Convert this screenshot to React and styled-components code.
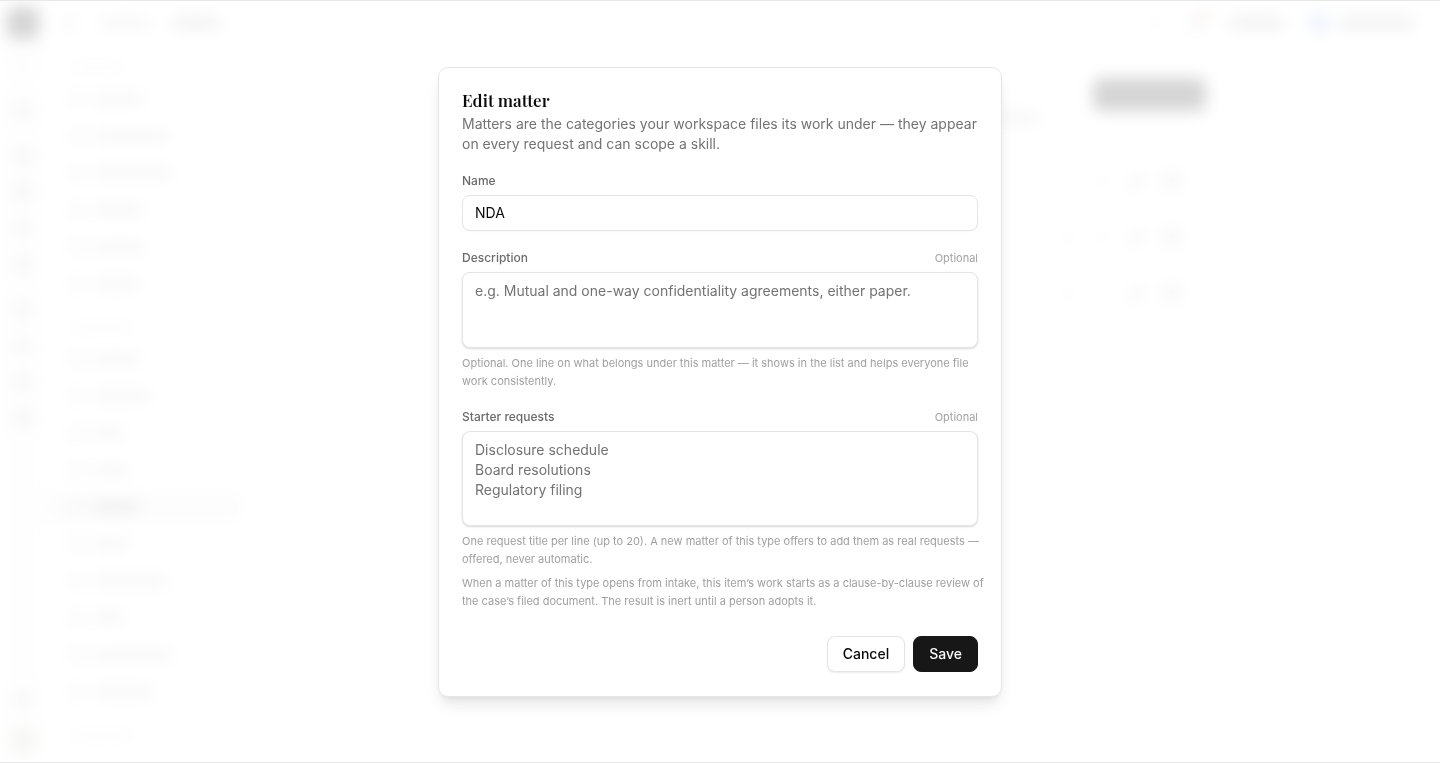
import React, { useState } from 'react'
import styled, { createGlobalStyle } from 'styled-components'
import { Bell, Box, ChevronDown, ChevronUp, Circle, FileText, Folder, Inbox, Layers, Pencil, Search, Settings, Trash2, Users } from 'lucide-react'

const railGroups = [
    [Search],
    [Inbox],
    [FileText, Layers, Users, Box],
    [Users, Folder, Box, Layers]
]

// widths of the label placeholders in the side menu
const menuTop = [50, 76, 80, 50, 52, 48]
const menuBottom = [46, 58, 32, 36, 46, 36, 74, 32, 80, 60]

const App = () => {
    const [matter, setMatter] = useState({
        name: "NDA",
        description: "",
        starters: ""
    })

    function handleChange(e) {
        setMatter({
            ...matter,
            [e.target.name]: e.target.value
        });
    }

    const handleSubmit = (e) => {
        e.preventDefault();
    };

    return (
        <>
            <GlobalStyle />
            <Workspace />
            <Overlay>
                <Dialog role="dialog" aria-modal="true" aria-labelledby="dialog_title" onSubmit={handleSubmit}>
                    <Intro>
                        <Title id="dialog_title">Edit matter</Title>
                        <Paragraph>
                            Matters are the categories your workspace files its work under — they appear on every request and can scope a skill.
                        </Paragraph>
                    </Intro>

                    <Field>
                        <Label htmlFor="name">Name</Label>
                        <Input
                            name="name"
                            type="text"
                            id="name"
                            value={matter.name}
                            onChange={handleChange}
                        />
                    </Field>

                    <Field>
                        <LabelRow>
                            <Label htmlFor="description">Description</Label>
                            <Optional>Optional</Optional>
                        </LabelRow>
                        <Textarea
                            name="description"
                            id="description"
                            $height={76}
                            value={matter.description}
                            onChange={handleChange}
                            placeholder="e.g. Mutual and one-way confidentiality agreements, either paper."
                        />
                        <Hint>
                            Optional. One line on what belongs under this matter — it shows in the list and helps everyone file work consistently.
                        </Hint>
                    </Field>

                    <Field>
                        <LabelRow>
                            <Label htmlFor="starters">Starter requests</Label>
                            <Optional>Optional</Optional>
                        </LabelRow>
                        <Textarea
                            name="starters"
                            id="starters"
                            $height={95}
                            value={matter.starters}
                            onChange={handleChange}
                            placeholder={"Disclosure schedule\nBoard resolutions\nRegulatory filing"}
                        />
                        <Hint>
                            One request title per line (up to 20). A new matter of this type offers to add them as real requests — offered, never automatic.
                        </Hint>
                        <Hint>
                            When a matter of this type opens from intake, this item’s work starts as a clause-by-clause review of the case’s filed document. The result is inert until a person adopts it.
                        </Hint>
                    </Field>

                    <Footer>
                        <Button type="button">Cancel</Button>
                        <Button type="submit" $primary>Save</Button>
                    </Footer>
                </Dialog>
            </Overlay>
        </>
    )
}

const MenuItems = ({ widths, active }) => (
    <>
        {widths.map((width, i) => (
            <MenuItem key={i} $active={i === active}>
                <Circle size={14} strokeWidth={3} />
                <Bar $width={width} $dark={i === active} />
            </MenuItem>
        ))}
    </>
)

// the page behind the dialog, always out of focus
const Workspace = () => (
    <Page aria-hidden="true">
        <Rail>
            <Logo />
            <RailList>
                {railGroups.map((icons, i) => (
                    <RailGroup key={i} $faint={i === 0}>
                        {icons.map((Icon, j) => <Icon key={j} size={16} />)}
                    </RailGroup>
                ))}
            </RailList>
            <RailEnd>
                <Settings size={16} />
                <Avatar />
            </RailEnd>
        </Rail>
        <Body>
            <Header>
                <Box size={14} color="#8c8c8c" />
                <Bar $width={52} />
                <Bar $width={46} $dark />
                <HeaderEnd>
                    <Search size={14} color="#b0b0b0" />
                    <BellWrapper>
                        <Bell size={16} />
                        <Dot />
                    </BellWrapper>
                    <Bar $width={54} $dark />
                    <Account>
                        <Badge />
                        <Bar $width={76} $dark />
                    </Account>
                </HeaderEnd>
            </Header>
            <Columns>
                <Menu>
                    <MenuHeading $width={54} />
                    <MenuItems widths={menuTop} />
                    <MenuHeading $width={64} />
                    <MenuItems widths={menuBottom} active={4} />
                    <MenuHeading $width={64} />
                    <MenuItems widths={[32]} />
                </Menu>
                <Main>
                    <MainHeader>
                        <Bar $width={554} />
                        <MainAction />
                    </MainHeader>
                    {[0, 1, 2].map((row) => (
                        <Row key={row}>
                            <ChevronUp size={14} opacity={row === 0 ? 0.3 : 1} />
                            <ChevronDown size={14} opacity={row === 2 ? 0.3 : 1} />
                            <Pencil size={15} />
                            <Trash2 size={16} />
                        </Row>
                    ))}
                </Main>
            </Columns>
        </Body>
    </Page>
)

export default App

const GlobalStyle = createGlobalStyle`
    * {
        box-sizing: border-box;
    }
    body {
        margin: 0;
        background: #ffffff;
        font-family: Inter, "Liberation Sans", sans-serif;
        color: #0a0a0a;
    }
    input, textarea, button {
        font-family: inherit;
    }
`
const Page = styled.div`
    display: flex;
    height: 100vh;
    overflow: hidden;
    color: #555555;
    filter: blur(8px);
`
const Rail = styled.div`
    display: flex;
    flex-direction: column;
    align-items: center;
    width: 46px;
    padding: 7px 0 10px;
    background: #fafafa;
`
const Logo = styled.div`
    width: 32px;
    height: 32px;
    border-radius: 8px;
    background: #171717;
`
const RailList = styled.div`
    display: flex;
    flex-direction: column;
    gap: 30px;
    padding-top: 17px;
`
const RailGroup = styled.div`
    display: flex;
    flex-direction: column;
    gap: 20px;
    opacity: ${(props) => props.$faint ? 0.4 : 1};
`
const RailEnd = styled.div`
    display: flex;
    flex-direction: column;
    align-items: center;
    gap: 20px;
    margin-top: auto;
`
const Avatar = styled.div`
    width: 26px;
    height: 26px;
    border-radius: 50%;
    background: #c8c8bc;
`
const Body = styled.div`
    display: flex;
    flex-direction: column;
    flex: 1;
`
const Header = styled.div`
    display: flex;
    align-items: center;
    gap: 22px;
    height: 46px;
    padding: 0 26px 0 17px;
`
const HeaderEnd = styled.div`
    display: flex;
    align-items: center;
    gap: 26px;
    margin-left: auto;
`
const BellWrapper = styled.div`
    position: relative;
    display: flex;
`
const Dot = styled.div`
    position: absolute;
    top: -5px;
    right: -5px;
    width: 8px;
    height: 8px;
    border-radius: 50%;
    background: #ef4444;
`
const Account = styled.div`
    display: flex;
    align-items: center;
    gap: 10px;
`
const Badge = styled.div`
    width: 18px;
    height: 18px;
    border-radius: 5px;
    background: #8fadf2;
`
const Bar = styled.div`
    width: ${(props) => props.$width}px;
    height: 10px;
    border-radius: 4px;
    background: ${(props) => props.$dark ? "#9c9c9c" : "#cccccc"};
`
const Columns = styled.div`
    display: flex;
    flex: 1;
    min-height: 0;
`
const Menu = styled.div`
    display: flex;
    flex-direction: column;
    width: 206px;
    overflow: hidden;
`
const MenuHeading = styled.div`
    flex: none;
    width: ${(props) => props.$width}px;
    height: 6px;
    margin: 18px 24px 14px;
    border-radius: 3px;
    background: #dddddd;
`
const MenuItem = styled.div`
    display: flex;
    flex: none;
    align-items: center;
    gap: 10px;
    height: 29px;
    margin: 0 10px 8px 0;
    padding-left: 23px;
    border-radius: 8px;
    color: #8c8c8c;
    background: ${(props) => props.$active ? "#f0f0f0" : "transparent"};
`
const Main = styled.div`
    flex: 1;
    max-width: 720px;
    margin: 0 auto;
    padding-top: 32px;
`
const MainHeader = styled.div`
    display: flex;
    align-items: flex-end;
    justify-content: space-between;
    margin-bottom: 30px;
`
const MainAction = styled.div`
    width: 113px;
    height: 33px;
    margin-bottom: 12px;
    border-radius: 8px;
    background: #171717;
`
const Row = styled.div`
    display: flex;
    align-items: center;
    justify-content: flex-end;
    gap: 20px;
    height: 56px;
    padding-right: 26px;
`
const Overlay = styled.div`
    position: fixed;
    inset: 0;
    display: grid;
    place-items: center;
    overflow: auto;
    border-top: 1px solid #e8e8e8;
    border-bottom: 1px solid #e8e8e8;
    background: rgba(255, 255, 255, 0.82);
`
const Dialog = styled.form`
    display: flex;
    flex-direction: column;
    gap: 19px;
    width: 100%;
    max-width: 564px;
    padding: 24px 23px;
    border: 1px solid #e5e5e5;
    border-radius: 10px;
    background: #ffffff;
    box-shadow: 0 10px 15px -3px rgba(0, 0, 0, 0.1), 0 4px 6px -4px rgba(0, 0, 0, 0.1);
`
const Intro = styled.div`
    display: flex;
    flex-direction: column;
    gap: 6px;
`
const Title = styled.h2`
    margin: 0;
    font-family: "Playfair Display", "Liberation Serif", serif;
    font-weight: 600;
    font-size: 17px;
    line-height: 16px;
`
const Paragraph = styled.p`
    margin: 0;
    font-size: 14px;
    line-height: 20px;
    color: #737373;
`
const Field = styled.div`
    display: flex;
    flex-direction: column;
    gap: 6px;
`
const LabelRow = styled.div`
    display: flex;
    align-items: center;
    justify-content: space-between;
`
const Label = styled.label`
    font-size: 12px;
    font-weight: 500;
    line-height: 16px;
    color: #6b6b6b;
`
const Optional = styled.span`
    font-size: 11px;
    line-height: 16px;
    color: #a3a3a3;
`
const Input = styled.input`
    width: 100%;
    height: 36px;
    padding: 0 12px;
    border: 1px solid #e5e5e5;
    border-radius: 8px;
    outline: none;
    background: #ffffff;
    box-shadow: 0 1px 2px rgba(0, 0, 0, 0.03);
    font-size: 14px;
    color: #0a0a0a;
`
const Textarea = styled.textarea`
    display: block;
    width: 100%;
    height: ${(props) => props.$height}px;
    padding: 8px 12px;
    border: 1px solid #e5e5e5;
    border-radius: 8px;
    outline: none;
    resize: none;
    background: #ffffff;
    box-shadow: 0 1px 2px rgba(0, 0, 0, 0.15);
    font-size: 14px;
    line-height: 20px;
    color: #0a0a0a;
    &::placeholder {
        color: #737373;
    }
`
const Hint = styled.p`
    margin: 0 -8px 0 0;
    font-size: 11px;
    line-height: 18px;
    color: #a0a0a0;
`
const Footer = styled.div`
    display: flex;
    justify-content: flex-end;
    gap: 8px;
    padding-top: 7px;
`
const Button = styled.button`
    height: 36px;
    padding: 0 15px;
    border: 1px solid ${(props) => props.$primary ? "#171717" : "#e5e5e5"};
    border-radius: 8px;
    background: ${(props) => props.$primary ? "#171717" : "#ffffff"};
    box-shadow: ${(props) => props.$primary ? "none" : "0 1px 2px rgba(0, 0, 0, 0.08)"};
    font-size: 14px;
    font-weight: 500;
    line-height: 20px;
    color: ${(props) => props.$primary ? "#fafafa" : "#0a0a0a"};
    cursor: pointer;
`
